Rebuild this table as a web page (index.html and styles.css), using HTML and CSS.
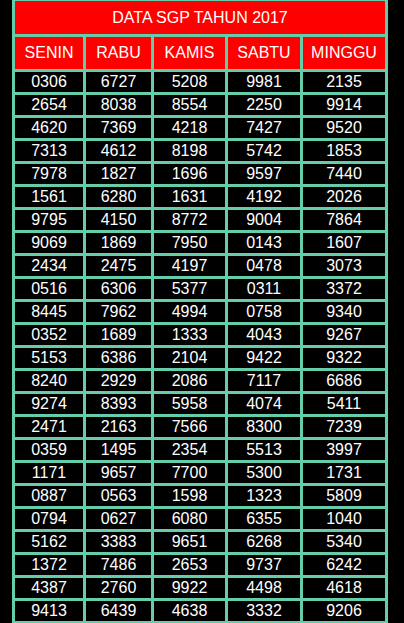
FILE: index.html
```html
<!DOCTYPE html>
<html>
<head>
<meta charset="utf-8">
<link rel="stylesheet" href="styles.css">
</head>
<body>
<div class="sheet">
  <div class="title">DATA SGP TAHUN 2017</div>
  <div class="head">SENIN</div><div class="head">RABU</div><div class="head">KAMIS</div><div class="head">SABTU</div><div class="head">MINGGU</div>
  <div class="c">0306</div><div class="c">6727</div><div class="c">5208</div><div class="c">9981</div><div class="c">2135</div>
  <div class="c">2654</div><div class="c">8038</div><div class="c">8554</div><div class="c">2250</div><div class="c">9914</div>
  <div class="c">4620</div><div class="c">7369</div><div class="c">4218</div><div class="c">7427</div><div class="c">9520</div>
  <div class="c">7313</div><div class="c">4612</div><div class="c">8198</div><div class="c">5742</div><div class="c">1853</div>
  <div class="c">7978</div><div class="c">1827</div><div class="c">1696</div><div class="c">9597</div><div class="c">7440</div>
  <div class="c">1561</div><div class="c">6280</div><div class="c">1631</div><div class="c">4192</div><div class="c">2026</div>
  <div class="c">9795</div><div class="c">4150</div><div class="c">8772</div><div class="c">9004</div><div class="c">7864</div>
  <div class="c">9069</div><div class="c">1869</div><div class="c">7950</div><div class="c">0143</div><div class="c">1607</div>
  <div class="c">2434</div><div class="c">2475</div><div class="c">4197</div><div class="c">0478</div><div class="c">3073</div>
  <div class="c">0516</div><div class="c">6306</div><div class="c">5377</div><div class="c">0311</div><div class="c">3372</div>
  <div class="c">8445</div><div class="c">7962</div><div class="c">4994</div><div class="c">0758</div><div class="c">9340</div>
  <div class="c">0352</div><div class="c">1689</div><div class="c">1333</div><div class="c">4043</div><div class="c">9267</div>
  <div class="c">5153</div><div class="c">6386</div><div class="c">2104</div><div class="c">9422</div><div class="c">9322</div>
  <div class="c">8240</div><div class="c">2929</div><div class="c">2086</div><div class="c">7117</div><div class="c">6686</div>
  <div class="c">9274</div><div class="c">8393</div><div class="c">5958</div><div class="c">4074</div><div class="c">5411</div>
  <div class="c">2471</div><div class="c">2163</div><div class="c">7566</div><div class="c">8300</div><div class="c">7239</div>
  <div class="c">0359</div><div class="c">1495</div><div class="c">2354</div><div class="c">5513</div><div class="c">3997</div>
  <div class="c">1171</div><div class="c">9657</div><div class="c">7700</div><div class="c">5300</div><div class="c">1731</div>
  <div class="c">0887</div><div class="c">0563</div><div class="c">1598</div><div class="c">1323</div><div class="c">5809</div>
  <div class="c">0794</div><div class="c">0627</div><div class="c">6080</div><div class="c">6355</div><div class="c">1040</div>
  <div class="c">5162</div><div class="c">3383</div><div class="c">9651</div><div class="c">6268</div><div class="c">5340</div>
  <div class="c">1372</div><div class="c">7486</div><div class="c">2653</div><div class="c">9737</div><div class="c">6242</div>
  <div class="c">4387</div><div class="c">2760</div><div class="c">9922</div><div class="c">4498</div><div class="c">4618</div>
  <div class="c">9413</div><div class="c">6439</div><div class="c">4638</div><div class="c">3332</div><div class="c">9206</div>
</div>
</body>
</html>
```
FILE: styles.css
```css
html, body {
  margin: 0;
  padding: 0;
  background: #000;
  overflow: hidden;
}
body {
  font-family: "Liberation Sans", Arial, sans-serif;
  color: #fff;
}
.sheet {
  display: grid;
  grid-template-columns: 68px 65px 71px 72px 82px;
  grid-template-rows: 33px 32px repeat(24, 20px);
  gap: 3px;
  padding: 3px;
  width: max-content;
  margin: -2px 0 0 12px;
  background: #66cdaa;
}
.title {
  grid-column: 1 / -1;
  background: #ff0000;
  color: #fff;
  font-size: 16px;
  display: flex;
  align-items: center;
  justify-content: center;
}
.head {
  background: #ff0000;
  color: #fff;
  font-size: 16px;
  display: flex;
  align-items: center;
  justify-content: center;
}
.c {
  background: #000;
  color: #fff;
  font-size: 16px;
  display: flex;
  align-items: center;
  justify-content: center;
}
```
